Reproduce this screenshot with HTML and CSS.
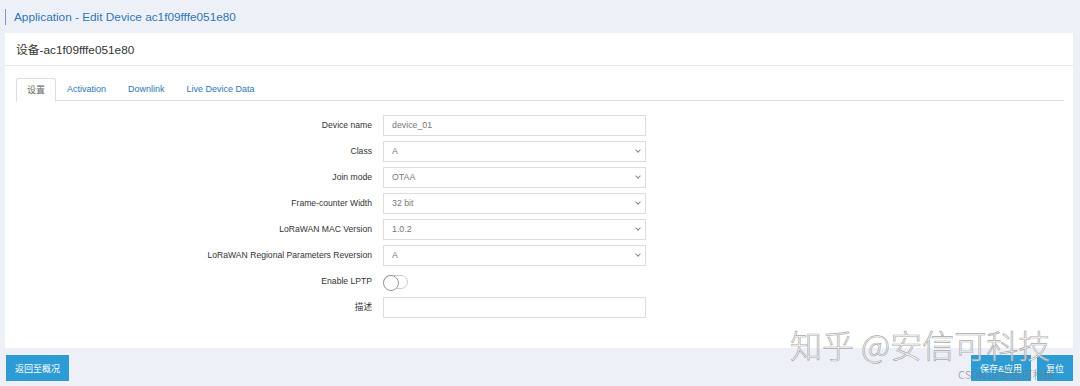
FILE: index.html
```html
<!DOCTYPE html>
<html lang="en">
<head>
    <meta charset="UTF-8">
    <title>Edit Device</title>
    <link rel="stylesheet" href="styles.css">
</head>
<body>
    <div class="pageTitle">Application - Edit Device ac1f09fffe051e80</div>
    <div class="card">
        <div class="cardHeader">设备-ac1f09fffe051e80</div>
        <div class="cardBody">
            <ul class="tabs">
                <li class="tab active">设置</li>
                <li class="tab">Activation</li>
                <li class="tab">Downlink</li>
                <li class="tab">Live Device Data</li>
            </ul>
            <div class="form">
                <label class="label">Device name</label>
                <div class="field">device_01</div>
                <label class="label">Class</label>
                <div class="field select">A</div>
                <label class="label">Join mode</label>
                <div class="field select">OTAA</div>
                <label class="label">Frame-counter Width</label>
                <div class="field select">32 bit</div>
                <label class="label">LoRaWAN MAC Version</label>
                <div class="field select">1.0.2</div>
                <label class="label">LoRaWAN Regional Parameters Reversion</label>
                <div class="field select">A</div>
                <label class="label">Enable LPTP</label>
                <div class="toggleRow"><span class="toggle"></span></div>
                <label class="label">描述</label>
                <div class="field"></div>
            </div>
        </div>
    </div>
    <div class="footer">
        <button class="btn">返回至概况</button>
        <div class="rightBtns">
            <button class="btn">保存&amp;应用</button>
            <button class="btn">复位</button>
        </div>
    </div>
    <!-- watermark from the screenshot -->
    <div class="watermark">知乎 @安信可科技</div>
    <div class="watermark2">CSDN @安信可科技</div>
</body>
</html>
```

FILE: styles.css
```css
*{
    margin: 0;
    padding: 0;
    box-sizing: border-box;
}
body{
    background-color: #edf1f7;
    font-family: "Liberation Sans", "Noto Sans CJK SC", sans-serif;
    color: #333;
    width: 1080px;
    height: 386px;
    overflow: hidden;
    position: relative;
}
.pageTitle{
    height: 33px;
    padding: 9px 0 0 14px;
    font-size: 11.8px;
    line-height: 16px;
    color: #2e75b6;
    position: relative;
}
.pageTitle::before{
    content: "";
    position: absolute;
    left: 5px;
    top: 9px;
    width: 1px;
    height: 16px;
    background: #6d9fd0;
}
.card{
    margin: 0 7px 0 5px;
    height: 315px;
    background: #fff;
}
.cardHeader{
    height: 33px;
    padding: 10px 0 0 11px;
    font-size: 11.8px;
    line-height: 15px;
    color: #333;
    border-bottom: 1px solid #e8e8e8;
}
.cardBody{
    padding: 12px 9px 0 11px;
}
.tabs{
    list-style: none;
    display: flex;
    border-bottom: 1px solid #ddd;
    height: 23px;
}
.tab{
    padding: 0 11px;
    height: 23px;
    line-height: 23px;
    font-size: 9px;
    color: #2e75b6;
}
.active{
    color: #666;
    border: 1px solid #ddd;
    border-bottom-color: #fff;
    border-radius: 3px 3px 0 0;
    background: #fff;
    height: 24px;
    line-height: 22px;
    padding: 0 10px;
}
.form{
    display: grid;
    grid-template-columns: 356px 263px;
    column-gap: 11px;
    row-gap: 5px;
    margin-top: 14px;
    padding-bottom: 30px;
}
.label{
    font-size: 8.6px;
    line-height: 21px;
    text-align: right;
    color: #333;
}
.field{
    height: 21px;
    border: 1px solid #ddd;
    font-size: 8.8px;
    line-height: 19px;
    padding-left: 8px;
    color: #777;
    position: relative;
}
.select::after{
    content: "";
    position: absolute;
    right: 5px;
    top: 6px;
    width: 3px;
    height: 3px;
    border-right: 1px solid #888;
    border-bottom: 1px solid #888;
    transform: rotate(45deg);
}
.toggleRow{
    height: 21px;
    display: flex;
    align-items: center;
}
.toggle{
    width: 25px;
    height: 14px;
    border: 1px solid #ccc;
    border-radius: 7px;
    position: relative;
}
.toggle::before{
    content: "";
    position: absolute;
    left: -1px;
    top: -1px;
    width: 14px;
    height: 14px;
    border-radius: 50%;
    border: 1px solid #999;
    background: #fff;
}
.footer{
    display: flex;
    justify-content: space-between;
    padding: 7px 7px 0 6px;
}
.rightBtns{
    display: flex;
    gap: 6px;
}
.btn{
    height: 26px;
    padding: 0 9px;
    border: none;
    background: #2d9bd4;
    color: #fff;
    font-size: 9px;
    font-family: "Liberation Sans", "Noto Sans CJK SC", sans-serif;
}
.watermark{
    position: absolute;
    left: 790px;
    top: 321px;
    font-size: 32px;
    color: rgba(255, 255, 255, 0.7);
    -webkit-text-stroke: 0.7px #aaa;
    font-family: "Noto Sans CJK SC", sans-serif;
    font-weight: 300;
}
.watermark2{
    position: absolute;
    left: 958px;
    top: 366px;
    font-size: 11px;
    color: rgba(120, 120, 120, 0.6);
    font-family: "Noto Sans CJK SC", sans-serif;
}
```
